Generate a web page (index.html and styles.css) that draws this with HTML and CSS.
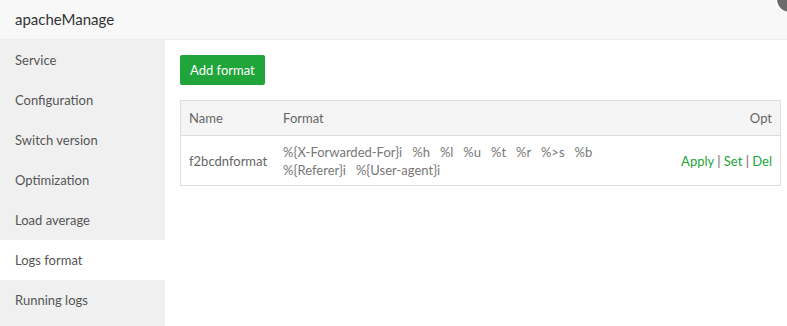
FILE: index.html
```html
<!DOCTYPE html>
<html>
<head>
    <meta charset="UTF-8">
    <title>apacheManage</title>
    <link rel="stylesheet" href="styles.css">
</head>
<body>
    <div class="header">apacheManage</div>
    <div class="close-btn"></div>
    <div class="main">
        <ul class="menu">
            <li>Service</li>
            <li>Configuration</li>
            <li>Switch version</li>
            <li>Optimization</li>
            <li>Load average</li>
            <li class="active">Logs format</li>
            <li>Running logs</li>
        </ul>
        <div class="content">
            <button class="btn-green">Add format</button>
            <table class="table">
                <thead>
                    <tr>
                        <th class="col-name">Name</th>
                        <th>Format</th>
                        <th class="opt">Opt</th>
                    </tr>
                </thead>
                <tbody>
                    <tr>
                        <td>f2bcdnformat</td>
                        <td class="fmt">%{X-Forwarded-For}i&nbsp;&nbsp; %h&nbsp;&nbsp; %l&nbsp;&nbsp; %u&nbsp;&nbsp; %t&nbsp;&nbsp; %r&nbsp;&nbsp; %&gt;s&nbsp;&nbsp; %b<br>%{Referer}i&nbsp;&nbsp; %{User-agent}i</td>
                        <td class="opt"><a>Apply</a> | <a>Set</a> | <a>Del</a></td>
                    </tr>
                </tbody>
            </table>
        </div>
    </div>
</body>
</html>
```

FILE: styles.css
```css
* {
    box-sizing: border-box;
}

body {
    margin: 0;
    font-family: Lato, 'Noto Sans', sans-serif;
    font-size: 13px;
    color: #555;
    background: #fff;
    overflow: hidden;
}

.header {
    height: 40px;
    line-height: 39px;
    padding-left: 15px;
    font-size: 15px;
    color: #333;
    background: #f8f8f8;
    border-bottom: 1px solid #eee;
}

.close-btn {
    position: absolute;
    top: -16px;
    right: -18px;
    width: 30px;
    height: 30px;
    border-radius: 50%;
    background: #6b6b6b;
    border: 2px solid #fff;
}

.main {
    display: flex;
    height: 286px;
}

.menu {
    list-style: none;
    margin: 0;
    padding: 0;
    width: 165px;
    background: #f0f0f0;
}

.menu li {
    height: 40px;
    line-height: 40px;
    padding-left: 15px;
    color: #555;
}

.menu li.active {
    background: #fff;
}

.content {
    flex: 1;
    padding: 15px 6px 0 15px;
}

.btn-green {
    display: block;
    height: 30px;
    padding: 0 10px;
    border: none;
    border-radius: 2px;
    background: #20a53a;
    color: #fff;
    font-family: inherit;
    font-size: 13px;
}

.table {
    width: 100%;
    margin-top: 15px;
    border-collapse: collapse;
    border: 1px solid #ddd;
}

.table th {
    height: 35px;
    padding: 0 8px;
    background: #f5f5f5;
    font-weight: normal;
    text-align: left;
    color: #666;
    border-bottom: 1px solid #ddd;
}

.table td {
    height: 50px;
    padding: 4px 8px;
    color: #666;
}

.col-name {
    width: 90px;
}

.table .fmt {
    line-height: 18px;
    vertical-align: top;
    padding-top: 7px;
    color: #777;
}

.table .opt {
    text-align: right;
}

td.opt {
    white-space: nowrap;
}

.opt a {
    color: #20a53a;
}
```
